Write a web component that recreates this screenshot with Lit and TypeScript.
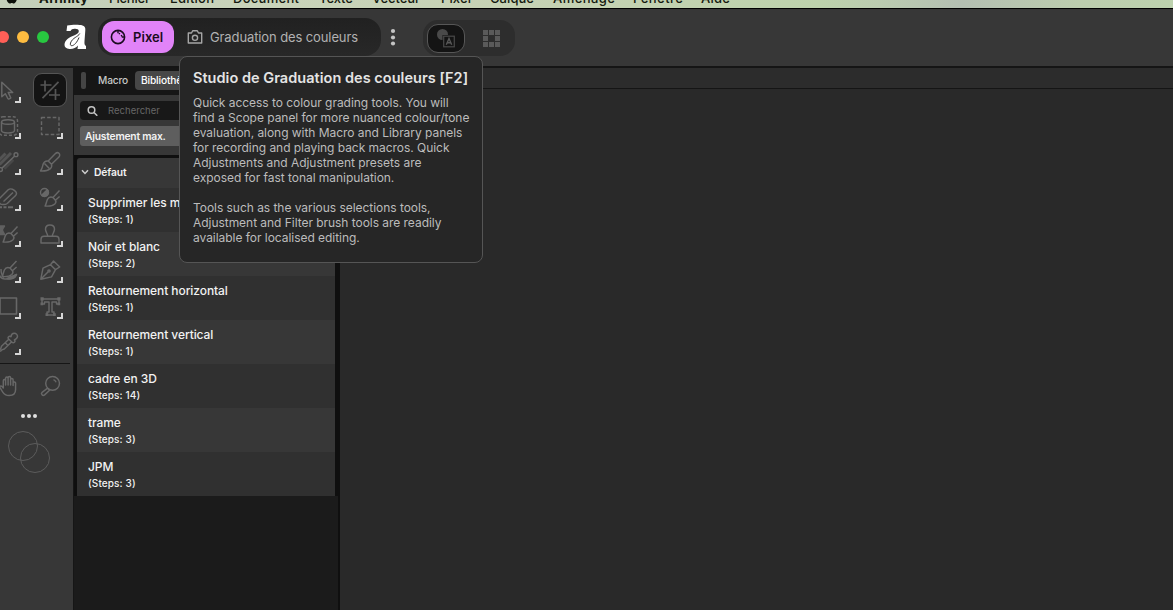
import { LitElement, html, svg, css } from "lit";
import { customElement } from "lit/decorators.js";

const MENUS: [string, number, number][] = [
  ["Fichier", 109, 41], ["Édition", 170, 44], ["Document", 233, 66], ["Texte", 319, 34],
  ["Vecteur", 372, 48], ["Pixel", 441, 30], ["Calque", 490, 44], ["Aménage", 553, 62],
  ["Fenêtre", 633, 50], ["Aide", 701, 29],
];

const MACROS: [string, number][] = [
  ["Supprimer les métadonnées", 1], ["Noir et blanc", 2], ["Retournement horizontal", 1],
  ["Retournement vertical", 1], ["cadre en 3D", 14], ["trame", 3], ["JPM", 3],
];

/* Tool glyphs, drawn on a 24 × 24 grid. */
const brush = svg`<path d="M21 3.300c-1.300-1.200-3-.3-3.800.5l-7 7.200 3.300 3.200 7.200-7c1-1 1.500-2.700.3-3.900zM10.200 11c-2.500-.3-4.400 1-5.100 3.300-.5 2-.9 4.500-2.600 6.700 3.700.2 7.500-.4 9.600-2.100 1.500-1.300 1.900-3 1.400-4.700M6.500 13.500l4.800 5"/>`;
const smallBrush = svg`<path d="M21.500 4.500l-6.500 7M21.600 10.500l-4.200 3.800M15 11.500c-2.200-.8-4.500-.2-5.600 2-.8 1.800-1 3.700-2.300 6.500 3.300.3 7.700-.1 9.700-2 1.300-1.300 1.300-2.800.6-3.700zM15 11.500l2.400 2.800"/>`;
const ICONS: Record<string, unknown> = {
  move: svg`<path d="M5.800 4.200v14.600l3.500-3.100 2.500 4.800c.3.600.8.700 1.400.4l1-.5c.6-.3.600-.8.3-1.300l-2.300-4.600h4.500z"/>`,
  crop: svg`<path d="M2.500 7h11M7 2.500v11M20.500 3.800L4.500 20.200M11 17h11M17.500 11v11" stroke-width="1.700"/>`,
  layer: svg`<rect x="2.800" y="2.800" width="18.700" height="18.500" rx="4" stroke-dasharray="3 2"/><ellipse cx="12" cy="8" rx="6.500" ry="2.300"/><path d="M5.500 8v8.500c0 3.200 13 3.200 13 0V8"/>`,
  marquee: svg`<rect x="3.500" y="3.500" width="17.500" height="17" stroke-dasharray="3.600 2"/>`,
  gradient: svg`<path d="M1 12L9.500 3.500M3.500 14.500L15 3" stroke-width="3" opacity=".6"/><path d="M8 18.500L17 9.500" stroke-width="3.500" opacity=".35"/><path d="M5.800 18.200L19 5.800"/><circle cx="4.500" cy="19.500" r="1.900"/><circle cx="20" cy="4.700" r="1.900"/>`,
  brush,
  eraser: svg`<path d="M3.500 12.500l8.700-8.700c2.500-2.300 6 .2 7.400 1.700 1.300 1.600.9 3.100 0 4l-8.300 8c-1.700 1.300-4 1.200-6 .9-2.300-.6-3.300-4.200-1.800-5.900zM7.500 15.500L17 6.500"/><path d="M1 21.200h17" stroke-width="1.900" stroke-dasharray="5 1.500 3 1.500"/>`,
  adjust: svg`<circle cx="6.500" cy="6.500" r="4"/><path d="M3.700 9.300l5.600-5.600a4 4 0 0 1-5.600 5.600z" fill="currentColor"/>${smallBrush}`,
  heal: svg`<path d="M2 4h6.500c-.5 1.500-2 2.300-2 4s1.500 2.500 2 4.500H2z" fill="currentColor" opacity=".85"/>${smallBrush}`,
  stamp: svg`<path d="M9.700 14.300c0-2.800-2.200-4.300-2.200-7C7.500 4.500 9.500 3 12 3s4.500 1.500 4.500 4.300c0 2.700-2.200 4.200-2.200 7M3 21v-3.500c0-1.900 1.200-3.200 3-3.200h12c1.800 0 3 1.300 3 3.200V21z"/>`,
  smudge: svg`<path d="M2 9c0 7 2 12 7 12 6 0 10 0 11.500-4.500-3 2-5 1.300-8 3.200M5 11c0 3 0 6 3 8.500"/><path d="M11 20.500c3-1 6-2 9.500-4-.5 3.500-5 4.800-9.500 4z" fill="currentColor"/><g transform="translate(-1 -1.500)">${smallBrush}</g>`,
  pen: svg`<path d="M2.800 21.200l2.200-11 7.500-3.500 5 5-4 7.200zM3 21l7-7M12.500 6.700l3-3.700 6.200 6-4.200 2.700"/><circle cx="11" cy="13" r="1.100"/>`,
  rect: svg`<rect x="4" y="4" width="16.500" height="16" stroke-width="1.600"/>`,
  text: svg`<path d="M4 5h17v5h-2.500V8h-4.500v10h2v3h-7v-3h2V8H6.500v2H4z"/><path d="M2.500 3.300h3.200v3.200H2.500zM19.300 3.300h3.200v3.200h-3.200zM2.500 8.600h2.700v2.700H2.500zM19.500 8.600h2.700v2.700h-2.700zM7.500 19.200h2.800V22H7.500zM15 19.200h2.800V22H15z" fill="currentColor" stroke="none"/>`,
  dropper: svg`<path d="M12.600 6.800c.8-1 1.700-.6 2.300 0 .3-1.800 1.500-3.600 3.200-3.600 2.200 0 3.700 1.800 3.300 3.800-.3 1.500-1.700 2.300-3 3 .8.800.6 1.700 0 2.300-.7.700-1.600.7-2.300 0l-3.500-3.400c-.7-.7-.7-1.400 0-2.100zM12.800 9.200l-7.300 7-.8 2.500-2 2M15.500 12l-7.200 7-2.500.9-1.600 1.700M9 12.500l2.700 2.700"/>`,
  hand: svg`<path d="M7.300 14V6.700c0-1.600 2.300-1.600 2.300 0V11 4.200c0-1.600 2.500-1.600 2.500 0V11 3.700c0-1.600 2.500-1.600 2.500 0V11 5.700c0-1.500 2.500-1.500 2.500 0V11.500 9c0-1.500 2.500-1.400 2.500 0v6.500c0 4-2.700 6-6.500 6-3.500 0-5.200-1.500-6.500-3.700L4 13.700c-.8-1.500 1-2.300 2-1.200z"/>`,
  zoom: svg`<circle cx="14.600" cy="9.300" r="6.900"/><path d="M15.500 5.700c1 .4 2.100 1.400 2.600 2.500M9.600 14.200l2 2-5 4.700c-1.900 1.500-4.200-.8-2.500-2.600z"/>`,
};

const TOOLS: [string, boolean, boolean?][] = [
  ["move", true], ["crop", false, true], ["layer", true], ["marquee", true],
  ["gradient", true], ["brush", true], ["eraser", true], ["adjust", true],
  ["heal", true], ["stamp", true], ["smudge", true], ["pen", true],
  ["rect", true], ["text", true], ["dropper", true],
];

@customElement("app-menubar")
class AppMenubar extends LitElement {
  static styles = css`
    :host { display: block; height: 8px; border-bottom: 1px solid #000; overflow: hidden;
      background: linear-gradient(90deg, #c3cfba, #c9d3ba 20%, #c6d2b4 45%, #bdd2ac 70%, #bbccb0 75%, #b4bfb2 82%, #bccdae 92%, #bdd2ae); }
    svg { display: block; }
    text { font: 500 13px Inter, "Liberation Sans", sans-serif; fill: #14190f; }
    .app { font-weight: 700; }
  `;
  render() {
    return html`<svg width="740" height="8">
      <path d="M6 -4h12c-1 4-2.500 7.500-4.200 7.500-1 0-1.200-.6-2-.6s-1 .6-2 .6C8 3.500 6 0 6-4z" fill="#0c100a"/>
      <text class="app" x="39" y="3" textLength="49">Affinity</text>
      ${MENUS.map(([t, x, w]) => svg`<text x=${x} y="2.500" textLength=${w}>${t}</text>`)}
    </svg>`;
  }
}

@customElement("app-titlebar")
class AppTitlebar extends LitElement {
  static styles = css`
    :host { display: flex; height: 57px; box-sizing: border-box; background: #373737; align-items: flex-start; overflow: hidden; }
    svg { display: block; flex: none; }
    .lights { display: flex; gap: 8px; margin: 22px 0 0 -3px; }
    .light { width: 12px; height: 12px; border-radius: 50%; }
    .red { background: #ff5f57; } .amber { background: #febc40; } .green { background: #28c840; }
    .logo { margin: 15px 0 0 15px; }
    .studios { display: flex; align-items: center; margin: 9px 0 0 11px; width: 283px; height: 38px; box-sizing: border-box; border-radius: 16px; background: linear-gradient(#212121, #282828); padding: 0 4px; }
    .pixel { display: flex; align-items: center; width: 72px; height: 32px; border-radius: 12px; background: #e183f8; color: #1b0b20; box-sizing: border-box; padding-left: 8px; gap: 7px; font-weight: 600; letter-spacing: .05px; }
    .grade { display: flex; align-items: center; gap: 7px; margin-left: 13px; color: #b2b2b2; letter-spacing: -.11px; white-space: nowrap; }
    .more { margin: 19px 0 0 9px; }
    .views { display: flex; align-items: center; margin: 11px 0 0 27px; width: 92px; height: 36px; box-sizing: border-box; border-radius: 15px; background: #2d2d2d; padding: 0 4px; }
    .view { width: 38px; height: 29px; box-sizing: border-box; border: 1px solid #575757; border-radius: 11px; background: #141414; display: flex; justify-content: center; align-items: center; }
    .grid { margin-left: 18px; }
  `;
  render() {
    const cells = [0, 1, 2].flatMap((r) => [0, 1, 2].filter((c) => r !== 1 || c !== 1).map((c) => [c, r]));
    return html`
      <div class="lights"><i class="light red"></i><i class="light amber"></i><i class="light green"></i></div>
      <svg class="logo" width="23" height="26" viewBox="0 0 23 26" fill="#fff">
        <path d="M3.200 1.500C8 .7 15 .5 18.500 1.500c2.700.9 3 2.500 2.800 5L20.500 17c-.2 3 0 4.300 1.500 5V25h-8.500l.5-3.500C12 23.700 9 25.300 5.500 25 2 24.800.3 23 .5 20.500.8 16 5 13.500 10 11.500c3-1.200 4.800-2.500 4.800-4.500 0-1.600-2-2.500-4.300-2.300-2 .1-3.200.8-4 2.300H2.500z"/>
        <path d="M15.800 9.500C14 13 8.500 13.500 6.500 19c-.5 1.800.1 2.700 1.200 2.700 2.400 0 5.500-3.500 7.300-8.200" fill="none" stroke="#373737" stroke-width="1"/>
      </svg>
      <div class="studios">
        <div class="pixel">
          <svg width="16" height="16" viewBox="0 0 16 16" fill="none" stroke="#1b0b20"><circle cx="8" cy="8" r="6.600" stroke-width="1.600"/><path d="M8 2v2.300M8.800 4.400l1.200.5M11.200 6l.7 1.300M11.800 8H14" stroke-width="1.400"/></svg>
          Pixel
        </div>
        <div class="grade">
          <svg width="16" height="16" viewBox="0 0 16 16" fill="none" stroke="#a6a6a6" stroke-width="1.400" stroke-linejoin="round"><path d="M1.300 4h3.200l1.200-2.300h4.600L11.500 4h3.200v10H1.300z"/><circle cx="8" cy="8.800" r="2.600"/></svg>
          Graduation des couleurs
        </div>
      </div>
      <svg class="more" width="6" height="19" fill="#c4c4c4"><circle cx="3" cy="3" r="2.100"/><circle cx="3" cy="9.500" r="2.100"/><circle cx="3" cy="15.500" r="2.100"/></svg>
      <div class="views">
        <div class="view">
          <svg width="18" height="19" viewBox="0 0 18 19"><circle cx="5.500" cy="5.500" r="5.500" fill="#4a4a4a"/><rect x="5.500" y="6" width="12" height="12" fill="#141414"/><rect x="6.700" y="7.200" width="10.600" height="10.600" fill="#141414" stroke="#4a4a4a" stroke-width="1.200"/><path d="M9.300 15.700l2.700-6.200 2.700 6.200M10 13.700h4" fill="none" stroke="#585858" stroke-width="1.400"/></svg>
        </div>
        <svg class="grid" width="17" height="17" fill="#5a5a5a">${cells.map(([c, r]) => svg`<rect x=${c * 6} y=${r * 6} width="5" height="5"/>`)}</svg>
      </div>`;
  }
}

@customElement("app-tools")
class AppTools extends LitElement {
  static styles = css`
    :host { display: block; box-sizing: border-box; width: 74px; background: #373737; border-right: 1px solid #161616; padding-top: 4px; overflow: hidden; color: #686868; }
    .tools { display: grid; grid-template-columns: 42px 42px; grid-auto-rows: 36px; margin-left: -13px; }
    .cell { display: grid; place-items: center; }
    .cell > * { grid-area: 1 / 1; }
    .icon { width: 24px; height: 24px; fill: none; stroke: currentColor; stroke-width: 1.450; stroke-linejoin: round; }
    .on { width: 32px; height: 32px; border: 1px solid #555; border-radius: 9px; background: #141414; color: #555; display: grid; place-items: center; }
    .mark { align-self: end; justify-self: end; width: 4px; height: 4px; border: solid #d6d6d6; border-width: 0 2px 2px 0; margin: 0 8px 5px 0; }
    .rule { height: 1px; width: 70px; background: #161616; margin: 3px 0 4px; }
    .dots { display: flex; gap: 2px; margin: 9.500px 0 0 21px; }
    .dot { width: 4px; height: 4px; border-radius: 50%; background: #e0e0e0; }
    .swatches { display: block; margin: 12.500px 0 0 7px; }
  `;
  icon(name: string) {
    return html`<svg class="icon" viewBox="0 0 24 24">${ICONS[name]}</svg>`;
  }
  render() {
    return html`
      <div class="tools">
        ${TOOLS.map(([name, mark, on]) => html`<div class="cell">
          ${on ? html`<div class="on">${this.icon(name)}</div>` : this.icon(name)}
          ${mark ? html`<i class="mark"></i>` : ""}
        </div>`)}
      </div>
      <div class="rule"></div>
      <div class="tools">
        <div class="cell">${this.icon("hand")}</div>
        <div class="cell">${this.icon("zoom")}</div>
      </div>
      <div class="dots"><i class="dot"></i><i class="dot"></i><i class="dot"></i></div>
      <svg class="swatches" width="44" height="44" fill="none" stroke="#5c5c5c"><circle cx="16" cy="16" r="14.500"/><circle cx="28" cy="28" r="14.500"/></svg>`;
  }
}

@customElement("app-library")
class AppLibrary extends LitElement {
  static styles = css`
    :host { display: flex; flex-direction: column; box-sizing: border-box; width: 266px; background: #1b1b1b; border-right: 2px solid #0f0f0f; color: #f2f2f2; overflow: hidden; white-space: nowrap; }
    .tabs { display: flex; align-items: center; height: 27px; padding: 0 0 3px 7px; box-sizing: border-box; background: #161616; font-size: 10.5px; font-weight: 500; letter-spacing: -.15px; }
    .grip { width: 5px; height: 17px; border-radius: 2px; background: #454545; }
    .tab { width: 30px; margin-left: 12px; color: #c8c8c8; font-size: 10.200px; }
    .tab.on { width: auto; height: 19px; line-height: 19px; margin-left: 7px; padding: 0 6px; border-radius: 4px; background: #474747; color: #fff; }
    .filter { height: 60px; box-sizing: border-box; padding: 6px 6px 0; background: #373737; }
    .search { display: flex; align-items: center; height: 19px; box-sizing: border-box; border-radius: 4px; background: #181818; color: #666; font-size: 9.500px; padding: 0 0 1px 7px; gap: 10px; letter-spacing: .02px; }
    .category { height: 20px; line-height: 21px; margin-top: 6px; padding-left: 5px; border-radius: 3px; background: #5e5e5e; font-size: 10.300px; font-weight: 600; letter-spacing: -.22px; }
    .list { padding: 3px 3px 0; background: #0f0f0f; }
    .head { display: flex; align-items: center; gap: 5px; height: 30px; box-sizing: border-box; padding: 0 0 2px 4px; border-radius: 3px 3px 0 0; background: #373737; font-size: 10.300px; font-weight: 600; letter-spacing: -.1px; }
    .row { height: 44px; box-sizing: border-box; padding: 7px 0 0 11px; background: #303030; }
    .row:nth-child(odd) { background: #373737; }
    .name { font-size: 12px; line-height: 16px; font-weight: 500; letter-spacing: -.08px; }
    .steps { font-size: 10px; line-height: 16px; font-weight: 500; letter-spacing: .12px; }
  `;
  render() {
    return html`
      <div class="tabs"><i class="grip"></i><span class="tab">Macro</span><span class="tab on">Bibliothèque</span></div>
      <div class="filter">
        <div class="search"><svg width="11" height="11" fill="none" stroke="#c4c4c4" stroke-width="1.500"><circle cx="4.500" cy="5" r="3.300"/><path d="M7 7.500l3.300 3.300"/></svg>Rechercher</div>
        <div class="category">Ajustement max.</div>
      </div>
      <div class="list">
        <div class="head"><svg width="8" height="8" fill="none" stroke="#ccc" stroke-width="1.500"><path d="M1 2.200l3 3.300 3-3.300"/></svg>Défaut</div>
        ${MACROS.map(([name, n]) => html`<div class="row"><div class="name">${name}</div><div class="steps">(Steps: ${n})</div></div>`)}
      </div>`;
  }
}

@customElement("app-root")
class AppRoot extends LitElement {
  static styles = css`
    :host { display: block; position: relative; width: 1173px; height: 610px; overflow: hidden; background: #292929; font: 13px Inter, "Liberation Sans", sans-serif; }
    .body { display: flex; height: 542px; border-top: 2px solid #151515; }
    .stage { flex: 1; }
    .context { height: 20px; background: #2c2c2c; border-bottom: 1px solid #151515; }
    .tip { position: absolute; left: 179px; top: 56px; width: 304px; height: 207px; box-sizing: border-box; border: 1px solid #555; border-radius: 8px; background: #262626; padding: 12px 0 0 13px; color: #bcbcbc; font-size: 12px; line-height: 15px; white-space: nowrap; letter-spacing: -.04px; }
    .title { font-size: 14.500px; line-height: 18px; font-weight: 600; color: #e4e4e4; margin-bottom: 8px; letter-spacing: .03px; }
    .para { margin: 0 0 15px; }
  `;
  render() {
    return html`
      <app-menubar></app-menubar>
      <app-titlebar></app-titlebar>
      <div class="body">
        <app-tools></app-tools>
        <app-library></app-library>
        <div class="stage"><div class="context"></div></div>
      </div>
      <div class="tip">
        <div class="title">Studio de Graduation des couleurs [F2]</div>
        <p class="para">Quick access to colour grading tools. You will<br>find a Scope panel for more nuanced colour/tone<br>evaluation, along with Macro and Library panels<br>for recording and playing back macros. Quick<br>Adjustments and Adjustment presets are<br>exposed for fast tonal manipulation.</p>
        <p class="para">Tools such as the various selections tools,<br>Adjustment and Filter brush tools are readily<br>available for localised editing.</p>
      </div>`;
  }
}
